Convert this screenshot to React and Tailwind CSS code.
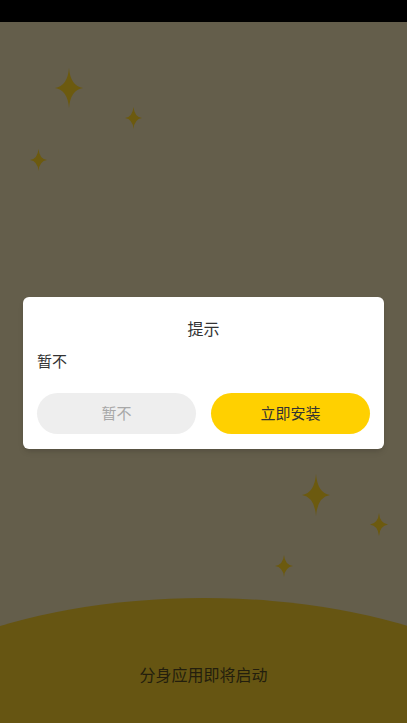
const STARS_TOP = [
  { x: 69, y: 66, w: 28, h: 40 },
  { x: 133, y: 96, w: 17, h: 22 },
  { x: 38, y: 138, w: 17, h: 22 },
]

const STARS_BOTTOM = [
  { x: 316, y: 473, w: 28, h: 42 },
  { x: 379, y: 502, w: 18, h: 23 },
  { x: 284, y: 544, w: 18, h: 22 },
]

function Sparkle({ x, y, w, h }) {
  return (
    <svg
      className="absolute"
      style={{ left: x - w / 2, top: y - h / 2, width: w, height: h }}
      viewBox="0 0 100 100"
      preserveAspectRatio="none"
    >
      <path d="M50 0 Q55 45 100 50 Q55 55 50 100 Q45 55 0 50 Q45 45 50 0Z" fill="#6c5a0f" />
    </svg>
  )
}

export default function App() {
  return (
    <div
      className="flex h-[723px] w-[407px] flex-col overflow-hidden bg-[#645e4b]"
      style={{ fontFamily: '"Noto Sans CJK SC", "Noto Sans", sans-serif' }}
    >
      <div className="h-[22px] shrink-0 bg-black" />

      <div className="relative flex flex-1 flex-col">
        {[...STARS_TOP, ...STARS_BOTTOM].map((s, i) => (
          <Sparkle key={i} {...s} />
        ))}

        <div className="flex-1" />

        <div className="flex h-[125px] justify-center overflow-hidden">
          <div className="flex h-[300px] w-[700px] shrink-0 justify-center rounded-t-[350px_150px] bg-[#665512]">
            <p className="m-0 mt-[64px] text-[16px] text-[#231e0d]">分身应用即将启动</p>
          </div>
        </div>

        <div className="absolute inset-0 flex items-center justify-center px-[23px]">
          <div className="w-full rounded-[6px] bg-white px-[14px] pb-[15px] pt-[19px] shadow-md">
            <h2 className="m-0 text-center text-[16px] font-normal leading-[24px] text-[#333]">提示</h2>
            <p className="m-0 mt-[10px] text-[15px] leading-[22px] text-[#333]">暂不</p>
            <div className="mt-[21px] flex gap-[15px]">
              <button
                type="button"
                className="h-[41px] flex-1 rounded-full bg-[#eeeeee] text-[15px] text-[#a8a8a8]"
              >
                暂不
              </button>
              <button
                type="button"
                className="h-[41px] flex-1 rounded-full bg-[#ffd000] text-[15px] text-[#333]"
              >
                立即安装
              </button>
            </div>
          </div>
        </div>
      </div>
    </div>
  )
}
